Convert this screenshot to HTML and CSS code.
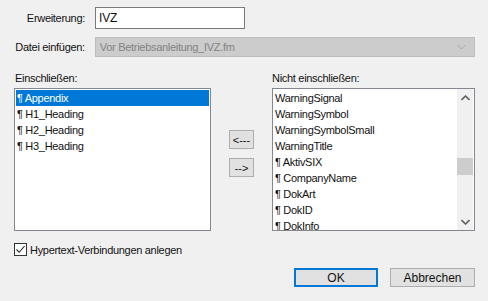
FILE: index.html
```html
<!DOCTYPE html>
<html lang="de">
<head>
  <meta charset="UTF-8" />
  <meta name="viewport" content="width=device-width, initial-scale=1.0"/>
  <title>Verzeichnis einfügen</title>
  <link rel="stylesheet" href="styles.css">
</head>
<body>
  <div class="dialog">
    <div class="field">
      <label class="field-label" for="ext">Erweiterung:</label>
      <input class="text-input" type="text" id="ext" value="IVZ">
    </div>

    <div class="field field-file">
      <span class="field-label">Datei einfügen:</span>
      <div class="combo">
        <span class="combo-text">Vor Betriebsanleitung_IVZ.fm</span>
        <svg class="combo-arrow" width="9" height="6" viewBox="0 0 9 6">
          <path d="M0.5 1 L4.5 5 L8.5 1" fill="none" stroke="#a8a8a8" stroke-width="1"/>
        </svg>
      </div>
    </div>

    <div class="lists">
      <div class="list-col">
        <div class="list-label">Einschließen:</div>
        <div class="listbox">
          <div class="items">
            <div class="item selected">¶ Appendix</div>
            <div class="item">¶ H1_Heading</div>
            <div class="item">¶ H2_Heading</div>
            <div class="item">¶ H3_Heading</div>
          </div>
        </div>
      </div>

      <div class="move-col">
        <button class="move-btn" type="button">&lt;---</button>
        <button class="move-btn" type="button">--&gt;</button>
      </div>

      <div class="list-col list-col-right">
        <div class="list-label">Nicht einschließen:</div>
        <div class="listbox">
          <div class="items">
            <div class="item">WarningSignal</div>
            <div class="item">WarningSymbol</div>
            <div class="item">WarningSymbolSmall</div>
            <div class="item">WarningTitle</div>
            <div class="item">¶ AktivSIX</div>
            <div class="item">¶ CompanyName</div>
            <div class="item">¶ DokArt</div>
            <div class="item">¶ DokID</div>
            <div class="item">¶ DokInfo</div>
          </div>
          <div class="scrollbar">
            <div class="sb-arrow">
              <svg width="9" height="6" viewBox="0 0 9 6">
                <path d="M0.5 5 L4.5 1 L8.5 5" fill="none" stroke="#606060" stroke-width="1.6"/>
              </svg>
            </div>
            <div class="sb-track">
              <div class="sb-thumb"></div>
            </div>
            <div class="sb-arrow">
              <svg width="9" height="6" viewBox="0 0 9 6">
                <path d="M0.5 1 L4.5 5 L8.5 1" fill="none" stroke="#606060" stroke-width="1.6"/>
              </svg>
            </div>
          </div>
        </div>
      </div>
    </div>

    <label class="check">
      <span class="check-box">
        <svg width="11" height="11" viewBox="0 0 11 11">
          <path d="M1.5 5.5 L4.2 8.3 L9.6 2" fill="none" stroke="#222" stroke-width="1.1"/>
        </svg>
      </span>
      Hypertext-Verbindungen anlegen
    </label>

    <div class="footer">
      <button class="btn btn-default" type="button">OK</button>
      <button class="btn" type="button">Abbrechen</button>
    </div>
  </div>
</body>
</html>
```

FILE: styles.css
```css
body {
  margin: 0;
  background: #f0f0f0;
  font-family: "Liberation Sans", Arial, sans-serif;
  font-size: 11px;
  letter-spacing: -0.3px;
  color: #111;
}

.dialog {
  width: 488px;
  height: 301px;
  box-sizing: border-box;
  padding: 7px 13px 0 14px;
}

.field {
  display: flex;
  align-items: center;
}

.field-file {
  margin-top: 8px;
}

.field-label {
  width: 71px;
  margin-right: 10px;
  text-align: right;
  white-space: nowrap;
}

.text-input {
  width: 150px;
  height: 22px;
  box-sizing: border-box;
  border: 1px solid #7a7a7a;
  background: #fff;
  padding: 0 3px;
  font: inherit;
  font-size: 12px;
  letter-spacing: -0.2px;
  color: #111;
  outline: none;
}

.combo {
  width: 381px;
  height: 20px;
  box-sizing: border-box;
  border: 1px solid #bdbdbd;
  background: #cccccc;
  display: flex;
  align-items: center;
  justify-content: space-between;
  padding: 0 8px 0 4px;
  color: #838383;
}

.lists {
  display: grid;
  grid-template-columns: 197px 61px 203px;
  margin-top: 15px;
}

.list-label {
  height: 13px;
  line-height: 13px;
  margin-bottom: 3px;
  padding-left: 1px;
}

.list-col-right .list-label {
  padding-left: 0;
}

.listbox {
  height: 143px;
  box-sizing: border-box;
  border: 1px solid #828790;
  background: #fff;
  display: flex;
  overflow: hidden;
}

.items {
  flex: 1;
  padding: 1px;
  overflow: hidden;
}

.item {
  height: 16px;
  line-height: 16px;
  padding-left: 1px;
  white-space: nowrap;
}

.item.selected {
  background: #0078d7;
  color: #fff;
}

.scrollbar {
  width: 16px;
  margin-right: 1px;
  background: #f0f0f0;
  display: flex;
  flex-direction: column;
}

.sb-arrow {
  height: 17px;
  display: flex;
  align-items: center;
  justify-content: center;
}

.sb-track {
  flex: 1;
}

.sb-thumb {
  height: 17px;
  margin-top: 52px;
  background: #cdcdcd;
}

.move-col {
  display: flex;
  flex-direction: column;
  align-items: center;
  gap: 9px;
  padding-top: 58px;
}

.move-btn {
  width: 25px;
  height: 19px;
  padding: 0;
  border: 1px solid #adadad;
  background: #e1e1e1;
  font: inherit;
  color: #111;
}

.check {
  display: flex;
  align-items: center;
  gap: 3px;
  margin-top: 12px;
}

.check-box {
  width: 13px;
  height: 13px;
  box-sizing: border-box;
  border: 1px solid #333;
  background: #fff;
  display: flex;
  align-items: center;
  justify-content: center;
}

.footer {
  display: flex;
  justify-content: flex-end;
  gap: 12px;
  margin-top: 12px;
}

.btn {
  width: 85px;
  height: 19px;
  box-sizing: border-box;
  padding: 0;
  border: 1px solid #adadad;
  background: #e1e1e1;
  font: inherit;
  font-size: 12px;
  color: #111;
}

.btn-default {
  width: 84px;
  border: 2px solid #0078d7;
}
```
